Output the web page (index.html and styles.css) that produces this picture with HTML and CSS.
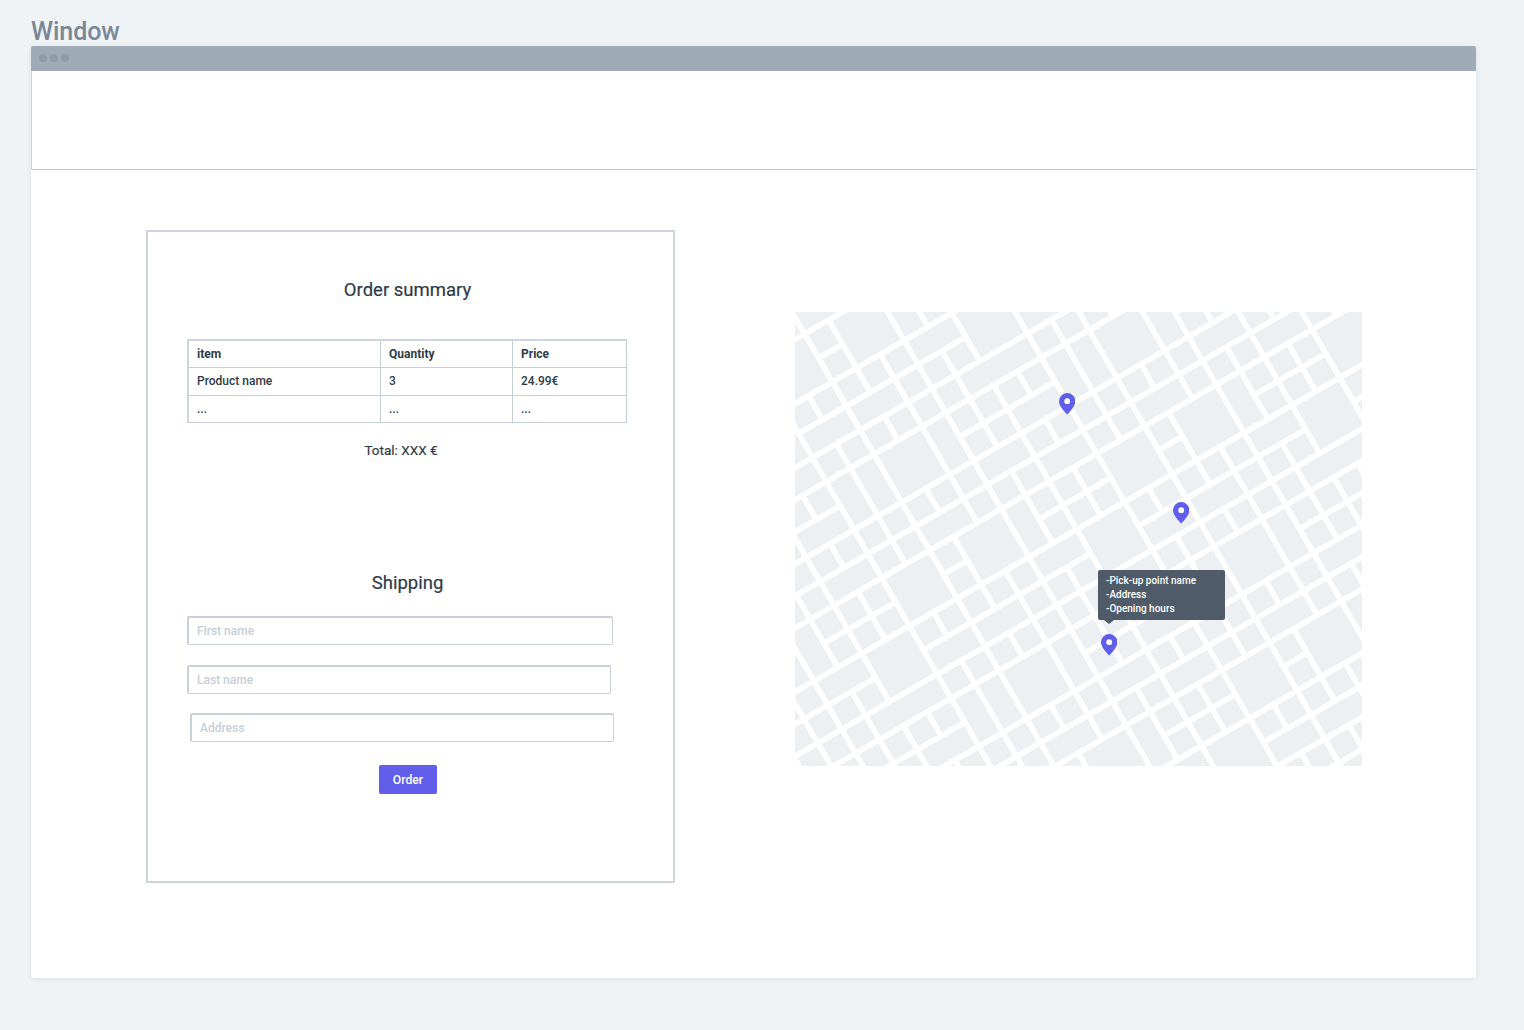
FILE: index.html
```html
<!DOCTYPE html>
<html lang="en">
<head>
<meta charset="utf-8">
<title>Window</title>
<link rel="stylesheet" href="styles.css">
</head>
<body>
<h1 class="frame-title">Window</h1>
<main class="window">
  <div class="titlebar"><i></i><i></i><i></i></div>
  <header class="site-header"></header>
  <div class="content">
    <section class="panel">
      <h2 class="heading">Order summary</h2>
      <table class="items">
        <colgroup><col class="col-item"><col class="col-qty"><col class="col-price"></colgroup>
        <thead><tr><th>item</th><th>Quantity</th><th>Price</th></tr></thead>
        <tbody>
          <tr><td>Product name</td><td>3</td><td>24.99€</td></tr>
          <tr><td>...</td><td>...</td><td>...</td></tr>
        </tbody>
      </table>
      <p class="total">Total: XXX €</p>
      <h2 class="heading shipping">Shipping</h2>
      <form class="form">
        <input class="field first" type="text" placeholder="First name">
        <input class="field last" type="text" placeholder="Last name">
        <input class="field address" type="text" placeholder="Address">
        <button class="order" type="button">Order</button>
      </form>
    </section>
    <section class="map">
      <svg class="streets" width="567" height="454" viewBox="0 0 567 454">
        <defs>
          <!-- 9 by 9 city blocks, one unit per block; the stroke is the street -->
          <path id="tile" d="
            M0 0h1v1h-1z M1 0h1v1h-1z M2 0h1v1h-1z M3 0h2v1h-2z M5 0h2v2h-2z M7 0h1v1h-1z M8 0h1v1h-1z
            M0 1h2v1h-2z M2 1h1v1h-1z M3 1h1v1h-1z M4 1h1v1h-1z M7 1h2v1h-2z
            M0 2h1v1h-1z M1 2h1v1h-1z M2 2h1v1h-1z M3 2h1v1h-1z M4 2h3v1h-3z M7 2h1v1h-1z M8 2h1v1h-1z
            M0 3h2v2h-2z M2 3h1v2h-1z M3 3h1v1h-1z M4 3h1v1h-1z M5 3h1v1h-1z M6 3h1v1h-1z M7 3h1v2h-1z M8 3h1v2h-1z
            M3 4h1v1h-1z M4 4h1v1h-1z M5 4h2v1h-2z
            M0 5h1v1h-1z M1 5h1v1h-1z M2 5h1v1h-1z M3 5h2v1h-2z M5 5h1v1h-1z M6 5h1v1h-1z M7 5h1v1h-1z M8 5h1v1h-1z
            M0 6h2v1h-2z M2 6h1v1h-1z M3 6h1v1h-1z M4 6h1v1h-1z M5 6h2v1h-2z M7 6h1v1h-1z M8 6h1v1h-1z
            M0 7h1v1h-1z M1 7h2v2h-2z M3 7h1v2h-1z M4 7h1v1h-1z M5 7h1v1h-1z M6 7h1v1h-1z M7 7h2v2h-2z
            M0 8h1v1h-1z M4 8h1v1h-1z M5 8h1v1h-1z M6 8h1v1h-1z"/>
        </defs>
        <g class="blocks" transform="matrix(23.9 -13.8 13.87 24.05 37.5 70)">
          <use href="#tile" x="-9" y="-9"/><use href="#tile" x="0" y="-9"/><use href="#tile" x="9" y="-9"/>
          <use href="#tile" x="-9" y="0"/><use href="#tile" x="0" y="0"/><use href="#tile" x="9" y="0"/>
          <use href="#tile" x="-9" y="9"/><use href="#tile" x="0" y="9"/><use href="#tile" x="9" y="9"/>
          <use href="#tile" x="-9" y="18"/><use href="#tile" x="0" y="18"/><use href="#tile" x="9" y="18"/>
        </g>
      </svg>
      <svg class="pin pin-a" viewBox="0 0 16.4 21.6"><path d="M8.2 0a8.2 8.2 0 0 1 8.2 8.2c0 4.5-4.3 9-8.2 13.4C4.3 17.2 0 12.7 0 8.2A8.2 8.2 0 0 1 8.2 0z"/><circle cx="8.2" cy="8.2" r="2.9"/></svg>
      <svg class="pin pin-b" viewBox="0 0 16.4 21.6"><path d="M8.2 0a8.2 8.2 0 0 1 8.2 8.2c0 4.5-4.3 9-8.2 13.4C4.3 17.2 0 12.7 0 8.2A8.2 8.2 0 0 1 8.2 0z"/><circle cx="8.2" cy="8.2" r="2.9"/></svg>
      <svg class="pin pin-c" viewBox="0 0 16.4 21.6"><path d="M8.2 0a8.2 8.2 0 0 1 8.2 8.2c0 4.5-4.3 9-8.2 13.4C4.3 17.2 0 12.7 0 8.2A8.2 8.2 0 0 1 8.2 0z"/><circle cx="8.2" cy="8.2" r="2.9"/></svg>
      <div class="tooltip">-Pick-up point name<br>-Address<br>-Opening hours</div>
    </section>
  </div>
</main>
</body>
</html>
```
FILE: styles.css
```css
* { box-sizing: border-box; }
body {
  margin: 0;
  height: 1030px;
  padding: 17px 47px 0 31px;
  overflow: hidden;
  background: #eff3f6;
  color: #2f3c48;
  font-family: Roboto, "Liberation Sans", sans-serif;
}
h1, h2, p { margin: 0; }
.frame-title {
  height: 29px;
  line-height: 30px;
  font-size: 25px;
  font-weight: 500;
  letter-spacing: -0.05px;
  color: #788896;
}
.window {
  width: 1445.4px;
  height: 932px;
  background: #fff;
  border-radius: 2px;
  box-shadow: 0 1px 5px rgba(60, 80, 100, 0.12);
}
.titlebar {
  display: flex;
  align-items: center;
  gap: 3px;
  height: 25px;
  padding: 0 0 1px 8px;
  background: #9fabb7;
  border-radius: 2px 2px 0 0;
}
.titlebar i {
  width: 8.4px;
  height: 8.4px;
  margin-right: -0.4px;
  border-radius: 50%;
  background: #8f9ba6;
}
.site-header {
  height: 99px;
  border-left: 1px solid #ccd3d9;
  border-bottom: 1px solid #c2cad0;
}
.content {
  display: flex;
  align-items: flex-start;
  gap: 120px;
  padding: 60px 0 0 115px;
}
.panel {
  width: 529px;
  height: 653px;
  padding: 46px 46px 0 39px;
  border: 2px solid #cdd6de;
}
.heading {
  height: 24px;
  padding-left: 1px;
  line-height: 24px;
  font-size: 18.5px;
  font-weight: 400;
  text-align: center;
  -webkit-text-stroke: 0.2px;
}
.items {
  width: 440px;
  height: 84px;
  margin-top: 37px;
  table-layout: fixed;
  border-collapse: separate;
  border-spacing: 0;
  border: solid #cdd6de;
  border-width: 2px 0 0 2px;
  font-size: 12px;
}
.col-item { width: 192px; }
.col-qty { width: 132px; }
.col-price { width: 114px; }
.items th, .items td {
  height: 27px;
  padding: 0 0 0 8px;
  border: solid #c3ced8;
  border-width: 0 1px 1px 0;
  text-align: left;
  line-height: 20px;
}
.items th { font-weight: 700; }
.items td { font-weight: 500; }
.total {
  height: 20px;
  margin-top: 17px;
  padding-right: 12px;
  line-height: 20px;
  font-size: 13.5px;
  text-align: center;
  -webkit-text-stroke: 0.2px;
}
.shipping { margin-top: 111px; }
.form {
  display: flex;
  flex-direction: column;
  align-items: flex-start;
  margin-top: 21px;
}
.field {
  height: 29px;
  padding: 0 8px;
  border: solid #c8d1da;
  border-width: 2px 1px 1px 2px;
  border-radius: 2px;
  outline: none;
  font: 500 12px Roboto, "Liberation Sans", sans-serif;
}
.field::placeholder { color: #c5cfd9; opacity: 1; }
.first { width: 426px; }
.last { width: 424px; margin-top: 20px; }
.address { width: 424px; margin: 19px 0 0 3px; }
.order {
  width: 58px;
  height: 29px;
  margin: 23px 0 0 192px;
  padding: 0;
  border: 0;
  border-radius: 2px;
  background: #605eea;
  color: #fff;
  font: 500 12.2px Roboto, "Liberation Sans", sans-serif;
}
.map {
  position: relative;
  width: 567px;
  height: 454px;
  margin-top: 82px;
}
.streets { display: block; }
.blocks { fill: #ecf0f3; stroke: #fff; stroke-width: 0.195; }
.pin { position: absolute; width: 16.4px; height: 21.6px; fill: #605eea; }
.pin circle { fill: #fff; }
.pin-a { left: 263.7px; top: 81px; }
.pin-b { left: 377.6px; top: 190px; }
.pin-c { left: 305.8px; top: 322px; }
.tooltip {
  position: absolute;
  left: 303px;
  top: 258px;
  width: 127px;
  height: 49.5px;
  padding: 4px 8px;
  border-radius: 2px;
  background: #4f5b68;
  color: #fff;
  font-size: 10px;
  font-weight: 500;
  line-height: 13.8px;
}
.tooltip::after {
  content: "";
  position: absolute;
  left: 6px;
  top: 100%;
  border: solid transparent;
  border-width: 4.5px 5px 0;
  border-top-color: #4f5b68;
}
```
